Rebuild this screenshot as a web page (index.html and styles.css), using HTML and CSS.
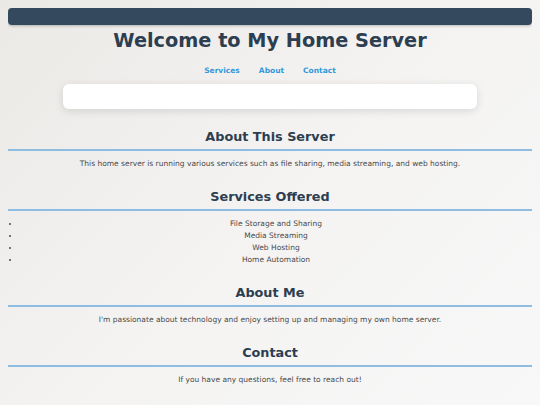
FILE: index.html
```html
<!DOCTYPE html>
<html lang="en">
<head>
<meta charset="utf-8">
<title>My Home Server</title>
<link rel="stylesheet" href="styles.css">
</head>
<body>
<header class="topbar"></header>
<h1 class="title">Welcome to My Home Server</h1>
<nav class="nav">
  <a href="#services">Services</a>
  <a href="#about">About</a>
  <a href="#contact">Contact</a>
</nav>
<div class="card"></div>
<section class="section first">
  <h2 class="heading">About This Server</h2>
  <p class="text">This home server is running various services such as file sharing, media streaming, and web hosting.</p>
</section>
<section class="section" id="services">
  <h2 class="heading">Services Offered</h2>
  <ul class="list">
    <li>File Storage and Sharing</li>
    <li>Media Streaming</li>
    <li>Web Hosting</li>
    <li>Home Automation</li>
  </ul>
</section>
<section class="section after-list" id="about">
  <h2 class="heading">About Me</h2>
  <p class="text">I'm passionate about technology and enjoy setting up and managing my own home server.</p>
</section>
<section class="section" id="contact">
  <h2 class="heading">Contact</h2>
  <p class="text">If you have any questions, feel free to reach out!</p>
</section>
</body>
</html>
```
FILE: styles.css
```css
html {
  min-height: 100%;
  background: linear-gradient(135deg, #ebe9e6 0%, #f4f3f2 50%, #f8f8f8 100%);
}
body {
  margin: 8px;
  font-family: "DejaVu Sans", Verdana, sans-serif;
  color: #4a4a4a;
  text-align: center;
}
.topbar {
  height: 17px;
  background: #34495e;
  border-radius: 4px;
  box-shadow: 0 1px 3px rgba(0,0,0,0.25);
}
.title {
  margin: 4px 0 0;
  font-size: 19.3px;
  line-height: 24px;
  color: #2c3e50;
}
.nav {
  margin-top: 13px;
  display: flex;
  justify-content: center;
  gap: 19px;
  font-size: 7.5px;
  line-height: 10px;
  font-weight: bold;
}
.nav a {
  color: #3498db;
  text-decoration: none;
}
.card {
  width: 414px;
  height: 25px;
  margin: 8px auto 0;
  background: #fff;
  border-radius: 6px;
  box-shadow: 0 2px 8px rgba(0,0,0,0.12);
}
.section {
  margin-top: 19px;
}
.section.first {
  margin-top: 20px;
}
.heading {
  margin: 0;
  font-size: 12.8px;
  line-height: 16px;
  color: #2c3e50;
  padding-bottom: 4px;
  border-bottom: 2px solid #8fbde2;
}
.text {
  margin: 7px 0 0;
  font-size: 7.5px;
  line-height: 12px;
}
.list {
  margin: 7px 0 0;
  padding-left: 12px;
  font-size: 7.5px;
  line-height: 12px;
}
```
